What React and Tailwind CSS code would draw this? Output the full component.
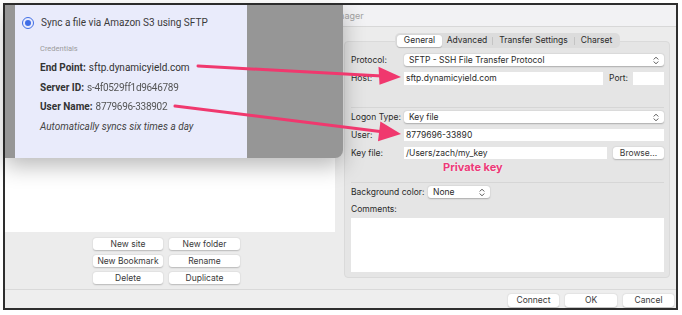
import React from "react";

function Chevrons() {
  return (
    <svg width="6" height="9" viewBox="0 0 6 9" className="shrink-0">
      <path d="M1 3.2 L3 1.2 L5 3.2" fill="none" stroke="#555" strokeWidth="1" strokeLinecap="round" strokeLinejoin="round" />
      <path d="M1 5.8 L3 7.8 L5 5.8" fill="none" stroke="#555" strokeWidth="1" strokeLinecap="round" strokeLinejoin="round" />
    </svg>
  );
}

function Select({ children, className = "" }) {
  return (
    <div className={"h-[12px] bg-white rounded-[3px] shadow-[0_0.5px_1.5px_rgba(0,0,0,0.25)] flex items-center pl-[5px] pr-[5px] " + className}>
      <span className="flex-1 leading-none">{children}</span>
      <Chevrons />
    </div>
  );
}

function Input({ children, className = "" }) {
  return (
    <div className={"h-[12px] bg-white flex items-center pl-[2px] leading-none " + className}>{children}</div>
  );
}

function Btn({ children, className = "" }) {
  return (
    <div className={"bg-white rounded-[3px] shadow-[0_0.5px_1.5px_rgba(0,0,0,0.22)] flex items-center justify-center leading-none text-[#3a3a3a] " + className}>
      {children}
    </div>
  );
}

function Row({ label, children, className = "" }) {
  return (
    <div className={"flex items-center h-[12px] " + className}>
      <div className="w-[53px] shrink-0 leading-none">{label}</div>
      {children}
    </div>
  );
}

export default function App() {
  return (
    <div className="relative w-[682px] h-[315px] bg-white overflow-hidden">
      <div className="ml-[3px] mt-[3px] w-[675px] h-[307px] border-2 border-[#2e2e2e] bg-[#ececec] flex flex-col font-['Inter',sans-serif] text-[8.5px] text-[#2b2b2b]">
        {/* title bar */}
        <div className="h-[22px] shrink-0 bg-[#f2f2f4] border-b border-[#d8d8d8] flex items-center justify-center pr-[10px] text-[9px] text-[#a3a3a3]">
          Site Manager
        </div>
        {/* main */}
        <div className="h-[262px] shrink-0 flex">
          {/* left pane */}
          <div className="w-[330px] shrink-0 flex flex-col">
            <div className="h-[205px] bg-white" />
            <div className="pt-[6px] pl-[88px] grid grid-cols-[70px_71px] gap-x-[6px] gap-y-[5px]">
              <Btn className="h-[12px]">New site</Btn>
              <Btn className="h-[12px]">New folder</Btn>
              <Btn className="h-[12px]">New Bookmark</Btn>
              <Btn className="h-[12px]">Rename</Btn>
              <Btn className="h-[12px]">Delete</Btn>
              <Btn className="h-[12px]">Duplicate</Btn>
            </div>
          </div>
          {/* right pane */}
          <div className="flex-1 pl-[9px] pr-[6px] pt-[14px]">
            <div className="h-[237px] bg-[#e5e5e5] border border-[#dadada] rounded-[4px] flex flex-col pl-[6px] pr-[5px]">
              {/* tabs */}
              <div className="-mt-[9px] h-[15px] flex justify-center">
                <div className="h-[15px] w-[225px] bg-[#dcdcdc] rounded-[5px] flex items-center px-[2px]">
                  <div className="h-[12px] w-[45px] bg-white rounded-[3px] shadow-[0_0.5px_1px_rgba(0,0,0,0.2)] flex items-center justify-center leading-none">General</div>
                  <div className="w-[50px] text-center leading-none">Advanced</div>
                  <div className="w-px h-[8px] bg-[#c4c4c4]" />
                  <div className="w-[81px] text-center leading-none">Transfer Settings</div>
                  <div className="w-px h-[8px] bg-[#c4c4c4]" />
                  <div className="flex-1 text-center leading-none">Charset</div>
                </div>
              </div>
              <Row label="Protocol:" className="mt-[6px]">
                <Select className="flex-1">SFTP - SSH File Transfer Protocol</Select>
              </Row>
              <Row label="Host:" className="mt-[6px] h-[13px]">
                <Input className="w-[199px] h-[13px]">sftp.dynamicyield.com</Input>
                <span className="ml-[6px] leading-none">Port:</span>
                <Input className="ml-auto w-[31px] h-[13px]" />
              </Row>
              <div className="mt-[22px] h-px bg-[#d6d6d6]" />
              <Row label="Logon Type:" className="mt-[3px]">
                <Select className="flex-1">Key file</Select>
              </Row>
              <Row label="User:" className="mt-[6px]">
                <Input className="flex-1">8779696-33890</Input>
              </Row>
              <Row label="Key file:" className="mt-[6px]">
                <Input className="w-[203px]">/Users/zach/my_key</Input>
                <Btn className="ml-auto w-[51px] h-[12px]">Browse...</Btn>
              </Row>
              <div className="mt-[1px] h-[14px] flex items-center pl-[92px]">
                <span className="font-bold text-[11px] leading-none text-[#ec3a78] [text-shadow:0_0_2px_rgba(255,255,255,0.9)]">Private key</span>
              </div>
              <div className="mt-[8px] h-px bg-[#d6d6d6]" />
              <div className="mt-[3px] h-[12px] flex items-center">
                <div className="w-[77px] shrink-0 leading-none">Background color:</div>
                <Select className="w-[62px]">None</Select>
              </div>
              <div className="mt-[5px] h-[12px] flex items-center leading-none">Comments:</div>
              <div className="mt-[3px] h-[54px] bg-white" />
            </div>
          </div>
        </div>
        {/* bottom bar */}
        <div className="flex-1 border-t border-[#d9d9d9] bg-[#eeeeee] flex justify-end gap-[6px] pt-[4px] pr-[2px]">
          <Btn className="w-[51px] h-[13px]">Connect</Btn>
          <Btn className="w-[52px] h-[13px]">OK</Btn>
          <Btn className="w-[51px] h-[13px]">Cancel</Btn>
        </div>
      </div>

      {/* pasted overlay panel */}
      <div className="absolute left-[5px] top-[5px] w-[338px] h-[153px] bg-[#969696] rounded-br-[8px] shadow-[0_8px_22px_rgba(0,0,0,0.28)] flex">
        <div className="ml-[10px] w-[232px] h-full bg-[#e9ebfb] flex flex-col font-['Roboto',sans-serif] text-[#333]">
          <div className="mt-[12px] h-[12px] flex items-center pl-[7px]">
            <div className="w-[12px] h-[12px] rounded-full border-[1.5px] border-[#3f6ee6] flex items-center justify-center shrink-0">
              <div className="w-[5.5px] h-[5.5px] rounded-full bg-[#3f6ee6]" />
            </div>
            <span className="ml-[7px] text-[10px] leading-none text-[#3a3a3a]">Sync a file via Amazon S3 using SFTP</span>
          </div>
          <div className="mt-[15px] h-[10px] flex items-center pl-[25px] text-[7.5px] leading-none text-[#9c9c9c]">Credentials</div>
          <div className="mt-[7px] h-[14px] flex items-center pl-[25px] text-[10px] leading-none">
            <span className="font-bold">End Point:</span>
            <span className="ml-[3px]">sftp.dynamicyield.com</span>
          </div>
          <div className="mt-[6px] h-[14px] flex items-center pl-[25px] text-[10px] leading-none">
            <span className="font-bold">Server ID:</span>
            <span className="ml-[3px] text-[#555] blur-[0.5px] tracking-[-0.3px]">s-4f0529ff1d9646789</span>
          </div>
          <div className="mt-[5px] h-[14px] flex items-center pl-[25px] text-[10px] leading-none">
            <span className="font-bold">User Name:</span>
            <span className="ml-[3px] text-[#555] blur-[0.5px] tracking-[-0.3px]">8779696-338902</span>
          </div>
          <div className="mt-[6px] h-[14px] flex items-center pl-[25px] text-[10px] leading-none italic text-[#444]">
            Automatically syncs six times a day
          </div>
        </div>
      </div>

      {/* annotation arrows */}
      <svg className="absolute left-0 top-0 pointer-events-none" width="682" height="315" viewBox="0 0 682 315">
        <line x1="198" y1="66" x2="382" y2="76" stroke="#f0386e" strokeWidth="3" strokeLinecap="round" />
        <polygon points="401,77 378.5,66.8 379.5,84.8" fill="#f0386e" />
        <line x1="175" y1="106" x2="382" y2="131.8" stroke="#f0386e" strokeWidth="3" strokeLinecap="round" />
        <polygon points="401,134 380.4,121.4 378,141.2" fill="#f0386e" />
      </svg>
    </div>
  );
}
